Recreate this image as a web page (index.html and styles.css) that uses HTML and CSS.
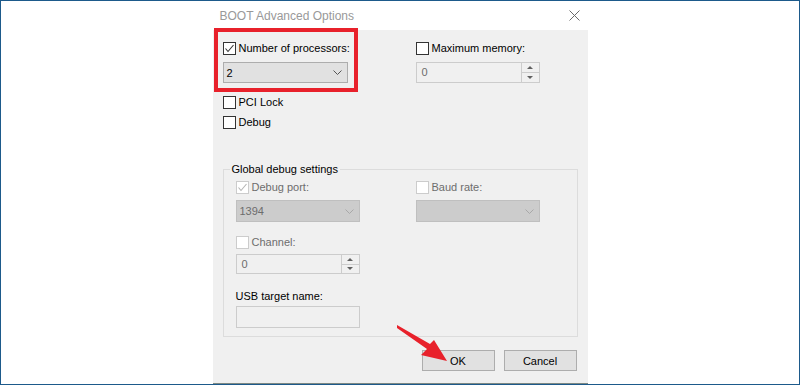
FILE: index.html
```html
<!DOCTYPE html>
<html lang="en">
<head>
    <meta charset="UTF-8">
    <title>BOOT Advanced Options</title>
    <link rel="stylesheet" href="styles.css">
</head>
<body>

    <div class="screen">
        <div class="dialog">
            <div class="titlebar">
                <span class="title">BOOT Advanced Options</span>
                <svg class="close" width="11" height="11" viewBox="0 0 11 11">
                    <path d="M0.5 0.5 L10.5 10.5 M10.5 0.5 L0.5 10.5" stroke="#6b6b6b" stroke-width="1" fill="none"/>
                </svg>
            </div>

            <div class="client">
                <div class="top-grid">
                    <label class="check">
                        <span class="box">
                            <svg width="11" height="11" viewBox="0 0 11 11"><polyline points="1.5,5.5 4,8.5 9.5,2" fill="none" stroke="#333" stroke-width="1.1"/></svg>
                        </span>
                        Number of processors:
                    </label>
                    <label class="check"><span class="box"></span>Maximum memory:</label>
                    <div class="select">
                        <span>2</span>
                        <svg width="9" height="5" viewBox="0 0 9 5"><polyline points="0.5,0.5 4.5,4.5 8.5,0.5" fill="none" stroke="#555" stroke-width="1"/></svg>
                    </div>
                    <div class="spin">
                        <span class="spin-val muted">0</span>
                        <span class="spin-btns">
                            <span class="spin-btn"><span class="tri-up"></span></span>
                            <span class="spin-btn"><span class="tri-down"></span></span>
                        </span>
                    </div>
                </div>

                <div class="opts">
                    <label class="check"><span class="box"></span>PCI Lock</label>
                    <label class="check"><span class="box"></span>Debug</label>
                </div>

                <fieldset class="group">
                    <legend>Global debug settings</legend>
                    <div class="group-body">
                        <div class="group-grid">
                            <label class="check disabled">
                                <span class="box">
                                    <svg width="11" height="11" viewBox="0 0 11 11"><polyline points="1.5,5.5 4,8.5 9.5,2" fill="none" stroke="#b4b4b4" stroke-width="1.1"/></svg>
                                </span>
                                Debug port:
                            </label>
                            <label class="check disabled"><span class="box"></span>Baud rate:</label>
                            <div class="select disabled">
                                <span>1394</span>
                                <svg width="9" height="5" viewBox="0 0 9 5"><polyline points="0.5,0.5 4.5,4.5 8.5,0.5" fill="none" stroke="#a8a8a8" stroke-width="1"/></svg>
                            </div>
                            <div class="select disabled">
                                <span></span>
                                <svg width="9" height="5" viewBox="0 0 9 5"><polyline points="0.5,0.5 4.5,4.5 8.5,0.5" fill="none" stroke="#a8a8a8" stroke-width="1"/></svg>
                            </div>
                        </div>

                        <label class="check disabled channel"><span class="box"></span>Channel:</label>
                        <div class="spin small">
                            <span class="spin-val muted">0</span>
                            <span class="spin-btns">
                                <span class="spin-btn"><span class="tri-up"></span></span>
                                <span class="spin-btn"><span class="tri-down"></span></span>
                            </span>
                        </div>

                        <div class="usb-label">USB target name:</div>
                        <div class="textbox"></div>
                    </div>
                </fieldset>

                <div class="buttons">
                    <button class="btn">OK</button>
                    <button class="btn">Cancel</button>
                </div>
            </div>

            <!-- marcas de la captura -->
            <div class="highlight"></div>
        </div>

        <svg class="arrow" width="70" height="50" viewBox="0 0 70 50">
            <polygon points="7,5 40,24 44,20 57,41 31,35 37,29 7,8" fill="#e8212b"/>
        </svg>
    </div>

</body>
</html>
```

FILE: styles.css
```css
body {
    margin: 0;
    font-family: "Liberation Sans", Arial, sans-serif;
    font-size: 11px;
    color: #000;
    background-color: #fff;
}
.screen {
    position: relative;
    box-sizing: border-box;
    width: 800px;
    height: 385px;
    border: 1px solid #1d5a8b;
    display: flex;
    justify-content: center;
    overflow: hidden;
}
.dialog {
    position: relative;
    width: 375px;
    display: flex;
    flex-direction: column;
}
.titlebar {
    height: 29px;
    background-color: #fff;
    display: flex;
    align-items: center;
    justify-content: space-between;
    padding: 0 8px 0 7px;
}
.title {
    font-size: 12px;
    color: #999;
}
.client {
    flex: 1;
    background-color: #f0f0f0;
    border-bottom: 1px solid #7c8884;
    padding: 12px 10px 0;
}
.top-grid {
    display: grid;
    grid-template-columns: 125px 124px;
    column-gap: 68px;
    row-gap: 7px;
}
.check {
    display: flex;
    align-items: center;
    gap: 3px;
    height: 13px;
    line-height: 13px;
    white-space: nowrap;
}
.box {
    box-sizing: border-box;
    width: 13px;
    height: 13px;
    border: 1px solid #333;
    background-color: #fff;
    display: flex;
    align-items: center;
    justify-content: center;
}
.check.disabled {
    color: #6d6d6d;
}
.check.disabled .box {
    border-color: #cccccc;
}
.select {
    box-sizing: border-box;
    height: 21px;
    border: 1px solid #adadad;
    background-color: #e1e1e1;
    display: flex;
    align-items: center;
    justify-content: space-between;
    padding: 0 5px 0 3px;
}
.select.disabled {
    background-color: #cccccc;
    border-color: #bfbfbf;
    color: #6d6d6d;
    height: 22px;
}
.spin {
    box-sizing: border-box;
    height: 21px;
    border: 1px solid #cccccc;
    background-color: #f0f0f0;
    display: flex;
    justify-content: space-between;
}
.spin-val {
    padding-left: 5px;
    line-height: 19px;
}
.muted {
    color: #6d6d6d;
}
.spin-btns {
    width: 17px;
    display: flex;
    flex-direction: column;
    border-left: 1px solid #cccccc;
}
.spin-btn {
    flex: 1;
    display: flex;
    align-items: center;
    justify-content: center;
    background-color: #f0f0f0;
}
.spin-btn + .spin-btn {
    border-top: 1px solid #cccccc;
}
.tri-up {
    width: 0;
    height: 0;
    border-left: 3.5px solid transparent;
    border-right: 3.5px solid transparent;
    border-bottom: 3px solid #606060;
}
.tri-down {
    width: 0;
    height: 0;
    border-left: 3.5px solid transparent;
    border-right: 3.5px solid transparent;
    border-top: 3px solid #606060;
}
.opts {
    margin-top: 13px;
    display: flex;
    flex-direction: column;
    gap: 7px;
}
.group {
    margin: 33px 0 0;
    padding: 5px 0 8px 6px;
    border: 1px solid #dcdcdc;
    min-width: 0;
}
.group legend {
    padding: 0 2px;
    line-height: 14px;
}
.group-body {
    padding-left: 6px;
}
.group-grid {
    display: grid;
    grid-template-columns: 124px 124px;
    column-gap: 56px;
    row-gap: 6px;
}
.channel {
    margin-top: 14px;
}
.spin.small {
    width: 124px;
    height: 20px;
    margin-top: 5px;
    background-color: #f0f0f0;
}
.spin.small .spin-val {
    line-height: 18px;
}
.usb-label {
    margin-top: 16px;
    line-height: 13px;
}
.textbox {
    box-sizing: border-box;
    width: 124px;
    height: 22px;
    margin-top: 3px;
    border: 1px solid #cccccc;
    background-color: #f0f0f0;
}
.buttons {
    margin-top: 13px;
    margin-right: 1px;
    display: flex;
    justify-content: flex-end;
    gap: 9px;
}
.btn {
    box-sizing: border-box;
    width: 73px;
    height: 21px;
    border: 1px solid #adadad;
    background-color: #e1e1e1;
    font-family: "Liberation Sans", Arial, sans-serif;
    font-size: 11px;
    color: #000;
    padding: 0;
}
.highlight {
    position: absolute;
    left: 1px;
    top: 27px;
    width: 144px;
    height: 64px;
    box-sizing: border-box;
    border: 4px solid #e8212b;
}
.arrow {
    position: absolute;
    left: 389px;
    top: 319px;
}
```
